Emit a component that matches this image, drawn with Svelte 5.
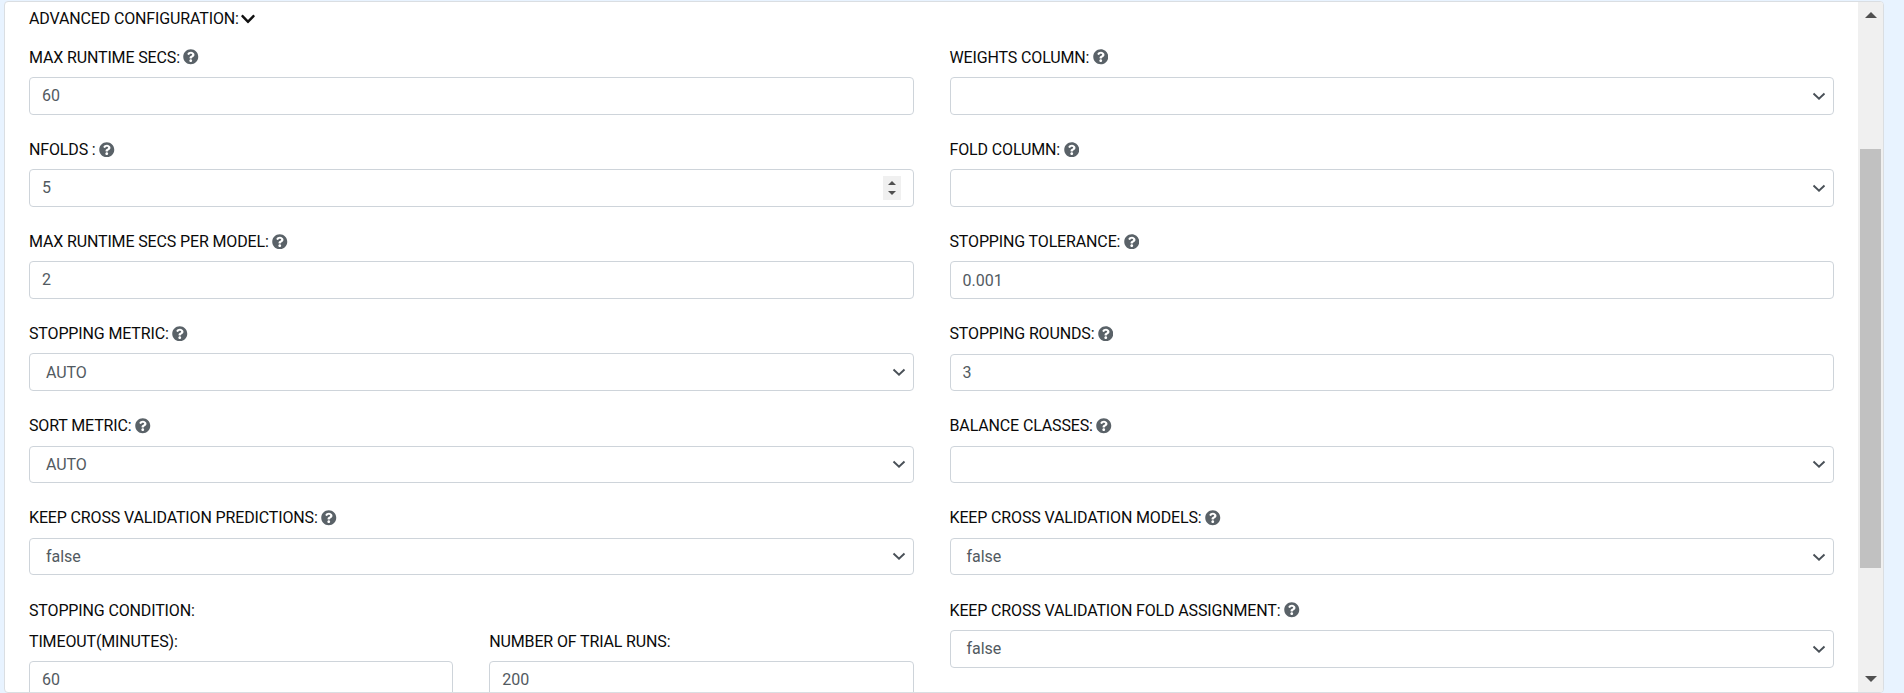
<script>
  const left = [
    { label: 'MAX RUNTIME SECS:', kind: 'text', value: '60' },
    { label: 'NFOLDS :', kind: 'number', value: '5' },
    { label: 'MAX RUNTIME SECS PER MODEL:', kind: 'text', value: '2' },
    { label: 'STOPPING METRIC:', kind: 'select', value: 'AUTO' },
    { label: 'SORT METRIC:', kind: 'select', value: 'AUTO' },
    { label: 'KEEP CROSS VALIDATION PREDICTIONS:', kind: 'select', value: 'false' }
  ];
  const right = [
    { label: 'WEIGHTS COLUMN:', kind: 'select', value: '' },
    { label: 'FOLD COLUMN:', kind: 'select', value: '' },
    { label: 'STOPPING TOLERANCE:', kind: 'text', value: '0.001' },
    { label: 'STOPPING ROUNDS:', kind: 'text', value: '3' },
    { label: 'BALANCE CLASSES:', kind: 'select', value: '' },
    { label: 'KEEP CROSS VALIDATION MODELS:', kind: 'select', value: 'false' },
    { label: 'KEEP CROSS VALIDATION FOLD ASSIGNMENT:', kind: 'select', value: 'false' }
  ];
  const stopping = [
    { label: 'TIMEOUT(MINUTES):', value: '60' },
    { label: 'NUMBER OF TRIAL RUNS:', value: '200' }
  ];
</script>

{#snippet help()}
  <svg class="help" viewBox="0 0 512 512" aria-hidden="true"><path d="M504 256c0 136.997-111.043 248-248 248S8 392.997 8 256C8 119.083 119.043 8 256 8s248 111.083 248 248zM262.655 90c-54.497 0-89.255 22.957-116.549 63.758-3.536 5.286-2.353 12.415 2.715 16.258l34.699 26.31c5.205 3.947 12.621 3.008 16.665-2.122 17.864-22.658 30.113-35.797 57.303-35.797 20.429 0 45.698 13.148 45.698 32.958 0 14.976-12.363 22.667-32.534 33.976C247.128 238.528 216 254.941 216 296v4c0 6.627 5.373 12 12 12h56c6.627 0 12-5.373 12-12v-1.333c0-28.462 83.186-29.647 83.186-106.667 0-58.002-60.165-102-116.531-102zM256 338c-25.365 0-46 20.635-46 46 0 25.364 20.635 46 46 46s46-20.636 46-46c0-25.364-20.635-46-46-46z" /></svg>
{/snippet}

{#snippet field(f)}
  <div class="field">
    <div class="label">{f.label}{@render help()}</div>
    <div class="control {f.kind}">
      <span>{f.value}</span>
      {#if f.kind === 'select'}
        <svg class="arrow" viewBox="0 0 14 9" aria-hidden="true"><path d="M1.5 1.5 7 6.8 12.5 1.5" /></svg>
      {:else if f.kind === 'number'}
        <svg class="spinner" viewBox="0 0 18 24" aria-hidden="true"><rect width="18" height="24" fill="#f0f0f0" /><path d="M5 9 9 5 13 9zM5 15 9 19 13 15z" fill="#505050" /></svg>
      {/if}
    </div>
  </div>
{/snippet}

<div class="page">
  <div class="panel">
    <div class="body">
      <div class="label heading">
        ADVANCED CONFIGURATION:<svg class="toggle" viewBox="0 0 448 512" aria-hidden="true"><path d="M207.029 381.476L12.686 187.132c-9.373-9.373-9.373-24.569 0-33.941l22.667-22.667c9.357-9.357 24.522-9.375 33.901-.04L224 284.505l154.745-154.021c9.379-9.335 24.544-9.317 33.901.04l22.667 22.667c9.373 9.373 9.373 24.569 0 33.941L240.971 381.476c-9.373 9.372-24.569 9.372-33.942 0z" /></svg>
      </div>
      <div class="columns">
        <div class="column">
          {#each left as f}{@render field(f)}{/each}
          <div class="stopping">
            <div class="label title">STOPPING CONDITION:</div>
            <div class="pair">
              {#each stopping as f}
                <div class="field">
                  <div class="label">{f.label}</div>
                  <div class="control text"><span>{f.value}</span></div>
                </div>
              {/each}
            </div>
          </div>
        </div>
        <div class="column end">
          {#each right as f}{@render field(f)}{/each}
        </div>
      </div>
    </div>
    <div class="scrollbar">
      <svg viewBox="0 0 12 6" aria-hidden="true"><path d="M0 6 6 0 12 6z" /></svg>
      <div class="track"><div class="thumb"></div></div>
      <svg viewBox="0 0 12 6" aria-hidden="true"><path d="M0 0 6 6 12 0z" /></svg>
    </div>
  </div>
</div>

<style>
  :global(body) {
    margin: 0;
    background: #e8f3ff;
  }
  .page {
    box-sizing: border-box;
    height: 693px;
    padding: 1px 20px 0 4px;
    overflow: hidden;
    font: 400 16px/24px Roboto, sans-serif;
  }
  .panel {
    box-sizing: border-box;
    display: flex;
    height: 692px;
    border: 1px solid #dadee2;
    border-radius: 4px;
    background: #fff;
    overflow: hidden;
  }
  .body {
    flex: 1;
    min-width: 0;
    padding: 4.59375px 24px 0;
  }
  .label {
    display: flex;
    align-items: center;
    height: 24px;
    color: #0a0a0a;
    letter-spacing: -0.14px;
    white-space: pre;
  }
  .heading {
    margin-bottom: 15px;
  }
  .help {
    width: 15.5px;
    height: 15.5px;
    margin: -1px 0 0 3.5px;
    fill: #5a6268;
  }
  .toggle {
    width: 14px;
    height: 16px;
    margin-left: 2.4px;
    fill: #111;
  }
  .columns {
    display: grid;
    grid-template-columns: 1fr 1fr;
    gap: 36px;
  }
  .column {
    display: flex;
    flex-direction: column;
    gap: 23.21875px;
    min-width: 0;
  }
  .field {
    display: flex;
    flex-direction: column;
    gap: 7.34375px;
  }
  .control {
    box-sizing: border-box;
    display: flex;
    align-items: center;
    justify-content: space-between;
    height: 37.609375px;
    padding: 0 12px;
    border: 1px solid #ced4da;
    border-radius: 4px;
    color: #525a61;
  }
  .control.select {
    padding: 0.75px 7px 0 16px;
    letter-spacing: -0.05px;
  }
  .end .control {
    height: 37.40625px;
    margin-top: 0.203125px;
    padding-top: 0.75px;
  }
  .arrow {
    width: 14px;
    height: 9px;
    fill: none;
    stroke: #495057;
    stroke-width: 1.9;
  }
  .spinner {
    width: 18px;
    height: 24px;
  }
  .title {
    margin-bottom: 7.1px;
  }
  .pair {
    display: grid;
    grid-template-columns: 1fr 1fr;
    gap: 36px;
  }
  .scrollbar {
    display: flex;
    flex-direction: column;
    align-items: center;
    box-sizing: border-box;
    width: 25px;
    padding: 10px 0;
    background: #f0f0f0;
  }
  .scrollbar svg {
    width: 12px;
    height: 6px;
    fill: #505050;
  }
  .track {
    flex: 1;
    width: 21px;
    padding-top: 131px;
    box-sizing: border-box;
  }
  .thumb {
    height: 419px;
    background: #c1c1c1;
  }
</style>
